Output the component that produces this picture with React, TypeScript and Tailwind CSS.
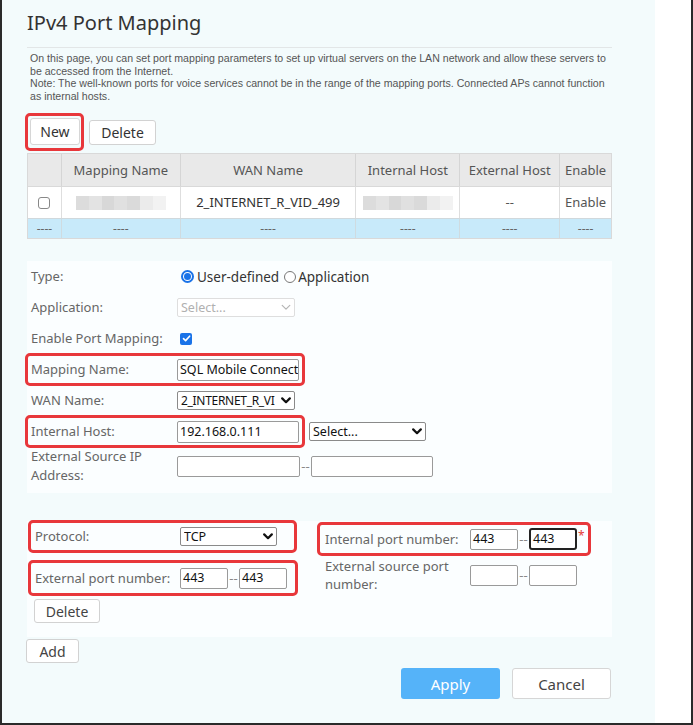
import React from 'react'

const RED = 'border-[#e8373b]'

function Chevron({ light }: { light?: boolean }) {
  return (
    <svg width="10" height="7" viewBox="0 0 10 7" className="shrink-0">
      <path
        d="M1.2 1.4 L5 5.2 L8.8 1.4"
        fill="none"
        stroke={light ? '#b5b5b5' : '#111'}
        strokeWidth={light ? 1.2 : 2.2}
        strokeLinecap="round"
        strokeLinejoin="round"
      />
    </svg>
  )
}

function FakeSelect({ value, className, disabled }: { value: string; className: string; disabled?: boolean }) {
  return (
    <div
      className={`flex items-center justify-between bg-white rounded-[2px] pl-[3px] pr-[3px] border overflow-hidden ${
        disabled ? 'border-[#dedede] text-[#b0b0b0]' : 'border-[#8a8a8a] text-[#111]'
      } ${className}`}
    >
      <span className="whitespace-nowrap overflow-hidden">{value}</span>
      <Chevron light={disabled} />
    </div>
  )
}

function Box({ value, className, focused }: { value?: string; className: string; focused?: boolean }) {
  return (
    <div
      className={`flex items-center bg-white whitespace-nowrap overflow-hidden text-[#111] text-[12.5px] pl-[2px] ${
        focused ? 'border-2 border-[#222] rounded-[3px]' : 'border border-[#9a9a9a] rounded-[2px]'
      } ${className}`}
    >
      {value}
    </div>
  )
}

function Dash() {
  return <span className="w-[11px] text-center text-[#888] leading-none">--</span>
}

function Row({
  label,
  hl,
  tall,
  children,
  after,
}: {
  label: React.ReactNode
  hl?: boolean
  tall?: boolean
  children?: React.ReactNode
  after?: React.ReactNode
}) {
  const inner = (
    <div className="flex items-center">
      <div className="w-[146px] shrink-0 leading-[19px]">{label}</div>
      <div className="flex items-center">{children}</div>
    </div>
  )
  return (
    <div className={`flex items-center pl-[4px] ${tall ? 'h-[38px]' : 'h-[31px]'}`}>
      {hl ? (
        <div className={`flex items-center h-[33px] -ml-[6px] px-[3px] border-[3px] ${RED} rounded-[5px]`}>{inner}</div>
      ) : (
        inner
      )}
      {after}
    </div>
  )
}

function Radio({ checked }: { checked?: boolean }) {
  return checked ? (
    <span className="w-[13px] h-[13px] rounded-full border-2 border-[#1a73e8] flex items-center justify-center bg-white">
      <span className="block w-[7px] h-[7px] rounded-full bg-[#1a73e8]" />
    </span>
  ) : (
    <span className="block w-[12px] h-[12px] rounded-full border border-[#777] bg-white" />
  )
}

function Blur() {
  return (
    <div className="h-[14px] w-[90px] mx-auto flex">
      <div className="flex-1 bg-[#dcdcdc]" />
      <div className="flex-1 bg-[#e3e3e3]" />
      <div className="flex-1 bg-[#d8d8d8]" />
      <div className="flex-1 bg-[#e0e0e0]" />
      <div className="flex-1 bg-[#dadada]" />
      <div className="flex-1 bg-[#ebebeb]" />
      <div className="flex-1 bg-[#f2f2f2]" />
    </div>
  )
}

const cols = ['w-[33px]', 'w-[119px]', 'w-[176px]', 'w-[104px]', 'w-[100px]', 'w-[52px]']

export default function App() {
  return (
    <div className="w-[693px] h-[725px] flex border-l-2 border-r-2 border-b-2 border-[#2a2a2a] bg-white font-['Noto_Sans',sans-serif] text-[13px] text-[#666]">
      <div className="w-[653px] bg-[#f3fbfc] pl-[25px] pt-[9px] flex flex-col">
        <div className="w-[585px] flex flex-col">
          <h1 className="text-[20px] leading-[27px] text-[#333] font-normal">IPv4 Port Mapping</h1>
          <div className="mt-[11px] border-t border-[#e2e6e7]" />

          <div className="mt-[4px] pl-[3px] font-['Liberation_Sans',Arial,sans-serif] text-[10.6px] leading-[12.6px] text-[#555]">
            <p>
              On this page, you can set port mapping parameters to set up virtual servers on the LAN network and allow these servers to be accessed from the Internet.
            </p>
            <p>
              Note: The well-known ports for voice services cannot be in the range of the mapping ports. Connected APs cannot function as internal hosts.
            </p>
          </div>

          {/* toolbar */}
          <div className="mt-[11px] flex items-center">
            <div className={`-ml-[2px] border-[3px] ${RED} rounded-[5px] pt-[2px] pb-[3px] pl-[2px] pr-[1px]`}>
              <button className="w-[50px] h-[27px] bg-white border border-[#d6d6d6] rounded-[3px] text-[#333] text-[14px]">New</button>
            </div>
            <button className="ml-[5px] w-[67px] h-[25px] bg-white border border-[#d2d2d2] rounded-[3px] text-[#333] text-[14px]">Delete</button>
          </div>

          {/* table */}
          <div className="mt-[2px] border border-[#d9d9d9] w-[585px] text-[#555]">
            <div className="flex h-[32px] bg-[#e9e9e9]">
              {['', 'Mapping Name', 'WAN Name', 'Internal Host', 'External Host', 'Enable'].map((h, i) => (
                <div key={i} className={`${cols[i]} flex items-center justify-center border-l border-[#d5d5d5] first:border-l-0 whitespace-nowrap`}>
                  {h}
                </div>
              ))}
            </div>
            <div className="flex h-[32px] bg-white border-t border-[#d9d9d9]">
              <div className={`${cols[0]} flex items-center justify-center`}>
                <span className="w-[12px] h-[12px] rounded-[3px] border border-[#888] bg-white" />
              </div>
              <div className={`${cols[1]} flex items-center border-l border-[#dedede]`}>
                <Blur />
              </div>
              <div className={`${cols[2]} flex items-center justify-center border-l border-[#dedede] text-[#333]`}>2_INTERNET_R_VID_499</div>
              <div className={`${cols[3]} flex items-center border-l border-[#dedede]`}>
                <Blur />
              </div>
              <div className={`${cols[4]} flex items-center justify-center border-l border-[#dedede] text-[#555]`}>--</div>
              <div className={`${cols[5]} flex items-center justify-center border-l border-[#dedede] text-[#555]`}>Enable</div>
            </div>
            <div className="flex h-[20px] bg-[#c8eafa] border-t border-[#d0d8dc] text-[#666] text-[12px]">
              {cols.map((c, i) => (
                <div key={i} className={`${c} flex items-center justify-center border-l border-[#cfdbe0] first:border-l-0`}>
                  ----
                </div>
              ))}
            </div>
          </div>

          {/* form panel 1 */}
          <div className="mt-[22px] bg-[#fbfeff] pb-[8px]">
            <Row label="Type:">
              <span className="ml-[4px]"><Radio checked /></span>
              <span className="ml-[3px] text-[#333] text-[13.5px]">User-defined</span>
              <span className="ml-[5px]"><Radio /></span>
              <span className="ml-[2px] text-[#333] text-[13.5px]">Application</span>
            </Row>
            <Row label="Application:">
              <FakeSelect disabled value="Select..." className="w-[118px] h-[19px] text-[12.5px]" />
            </Row>
            <Row label="Enable Port Mapping:">
              <span className="ml-[3px] w-[12px] h-[12px] rounded-[2px] bg-[#1a73e8] flex items-center justify-center">
                <svg width="9" height="9" viewBox="0 0 9 9">
                  <path d="M1.5 4.6 L3.6 6.6 L7.6 2.2" fill="none" stroke="#fff" strokeWidth="1.6" strokeLinecap="round" strokeLinejoin="round" />
                </svg>
              </span>
            </Row>
            <Row label="Mapping Name:" hl>
              <Box value="SQL Mobile Connect" className="w-[122px] h-[22px]" />
            </Row>
            <Row label="WAN Name:">
              <FakeSelect value="2_INTERNET_R_VI" className="w-[118px] h-[19px] text-[12px] tracking-[-0.3px]" />
            </Row>
            <Row
              label="Internal Host:"
              hl
              after={<FakeSelect value="Select..." className="ml-[4px] w-[117px] h-[19px] text-[12.5px]" />}
            >
              <Box value="192.168.0.111" className="w-[122px] h-[22px]" />
            </Row>
            <Row label="External Source IP Address:" tall>
              <Box className="w-[123px] h-[21px]" />
              <Dash />
              <Box className="w-[122px] h-[21px]" />
            </Row>
          </div>

          {/* form panel 2 */}
          <div className="mt-[28px] bg-[#fbfeff] h-[116px] flex">
            <div className="w-[290px] flex flex-col items-start">
              <div className={`-mt-[1px] ml-[1px] h-[33px] flex items-center pl-[4px] pr-[17px] border-[3px] ${RED} rounded-[5px]`}>
                <span className="w-[145px]">Protocol:</span>
                <FakeSelect value="TCP" className="w-[97px] h-[19px] text-[12.5px]" />
              </div>
              <div className={`mt-[7px] ml-[1px] h-[36px] flex items-center pl-[4px] pr-[8px] border-[3px] ${RED} rounded-[5px]`}>
                <span className="w-[145px]">External port number:</span>
                <Box value="443" className="w-[48px] h-[21px]" />
                <Dash />
                <Box value="443" className="w-[48px] h-[21px]" />
              </div>
              <button className="mt-[3px] ml-[7px] w-[66px] h-[24px] bg-white border border-[#d2d2d2] rounded-[3px] text-[#444] text-[14px]">
                Delete
              </button>
            </div>
            <div className="flex flex-col items-start">
              <div className={`mt-[1px] h-[34px] flex items-center pl-[5px] pr-[2px] border-[3px] ${RED} rounded-[5px]`}>
                <span className="w-[145px]">Internal port number:</span>
                <Box value="443" className="w-[48px] h-[21px]" />
                <Dash />
                <Box value="443" focused className="w-[48px] h-[22px]" />
                <span className="w-[8px] text-[#e53935] text-[12px] leading-none self-start mt-[5px] ml-[1px]">*</span>
              </div>
              <div className="h-[38px] flex items-center pl-[8px]">
                <span className="w-[145px] leading-[18px]">External source port number:</span>
                <Box className="w-[48px] h-[21px]" />
                <Dash />
                <Box className="w-[48px] h-[21px]" />
              </div>
            </div>
          </div>

          <button className="mt-[2px] -ml-[1px] w-[53px] h-[24px] bg-white border border-[#d2d2d2] rounded-[3px] text-[#444] text-[14px]">
            Add
          </button>

          <div className="mt-[5px] flex justify-end gap-[12px] pr-[1px]">
            <button className="w-[99px] h-[31px] bg-[#55b3f9] rounded-[3px] text-white text-[15px]">Apply</button>
            <button className="w-[99px] h-[31px] bg-white border border-[#d6d6d6] rounded-[3px] text-[#444] text-[15px]">Cancel</button>
          </div>
        </div>
      </div>
      <div className="flex-1" />
    </div>
  )
}
